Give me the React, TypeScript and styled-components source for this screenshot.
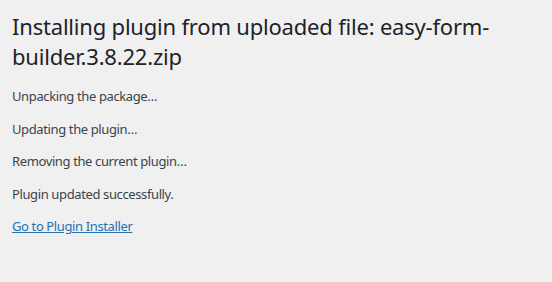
import React from "react";
import styled, { createGlobalStyle } from "styled-components";

const Global = createGlobalStyle`
  html, body { margin: 0; padding: 0; background: #f0f0f1; }
  body { font-family: "Segoe UI", "Noto Sans", "Open Sans", sans-serif; color: #3c434a; }
`;

const Wrap = styled.div`
  width: 520px;
  padding: 11px 0 0 12px;
`;

const Title = styled.h1`
  margin: 0 0 16px;
  font-size: 22px;
  font-weight: 400;
  line-height: 30px;
  color: #1d2327;
  letter-spacing: -0.2px;
`;

const Line = styled.p`
  margin: 13px 0;
  font-size: 13px;
  line-height: 1.5;
  letter-spacing: -0.38px;
`;

const Link = styled.a`
  color: #2271b1;
  text-decoration: underline;
`;

export default function App() {
  return (
    <>
      <Global />
      <Wrap>
        <Title>Installing plugin from uploaded file: easy-form-builder.3.8.22.zip</Title>
        <Line>Unpacking the package…</Line>
        <Line>Updating the plugin…</Line>
        <Line>Removing the current plugin…</Line>
        <Line>Plugin updated successfully.</Line>
        <Line>
          <Link href="#">Go to Plugin Installer</Link>
        </Line>
      </Wrap>
    </>
  );
}
